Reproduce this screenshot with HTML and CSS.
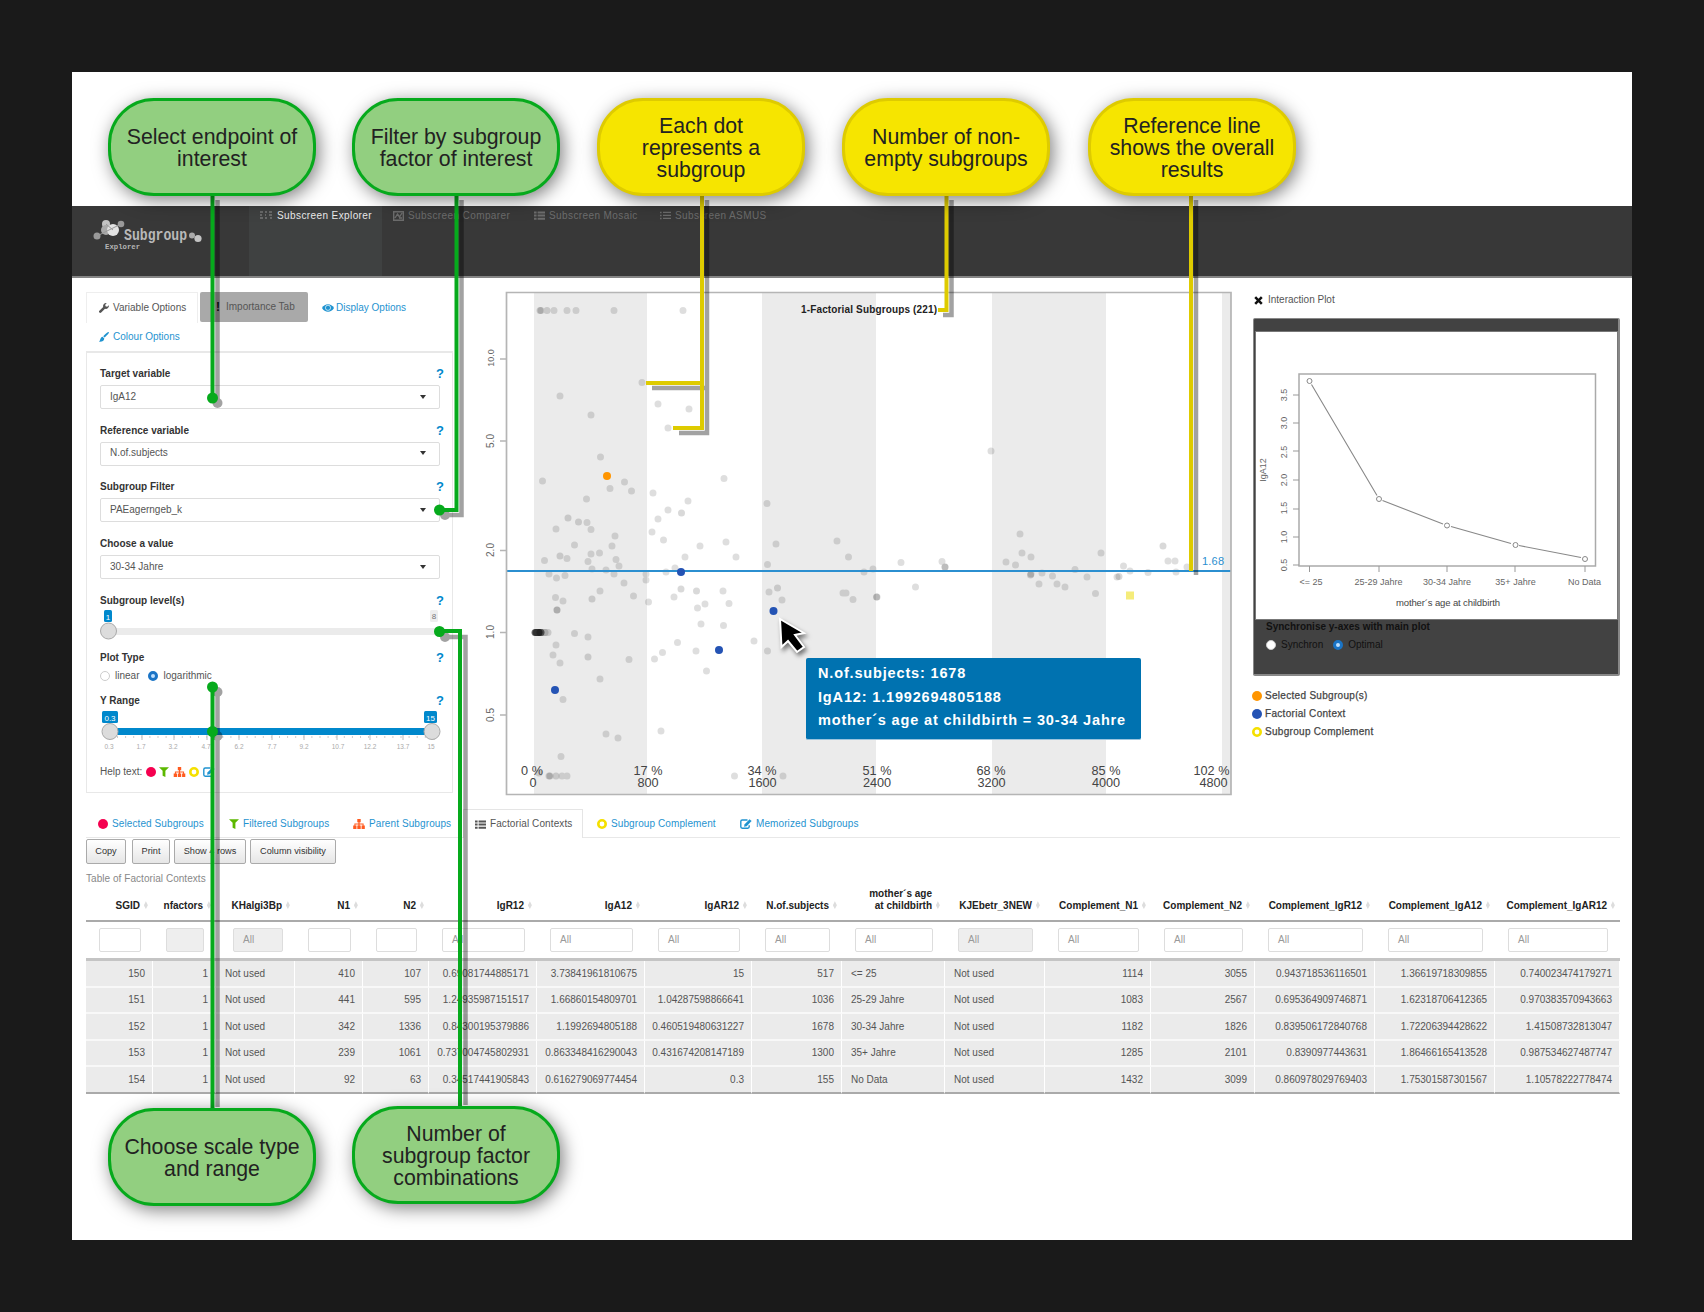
FILE: index.html
```html
<!DOCTYPE html>
<html lang="en">
<head>
<meta charset="utf-8">
<title>Subscreen Explorer</title>
<link rel="stylesheet" href="styles.css">
</head>
<body>
<svg class="defs" width="0" height="0" aria-hidden="true">
  <symbol id="i-dot" viewBox="0 0 10 10"><circle cx="5" cy="5" r="5" fill="currentColor"/></symbol>
  <symbol id="i-ring" viewBox="0 0 10 10"><circle cx="5" cy="5" r="3.7" fill="none" stroke="currentColor" stroke-width="2.6"/></symbol>
  <symbol id="i-filter" viewBox="0 0 10 10"><path d="M0 .2h10L6.400 3.800V10L3.600 8.800v-5z" fill="currentColor"/></symbol>
  <symbol id="i-tree" viewBox="0 0 12 10"><path d="M4.3 0h3.4v3.2H6.6v1.3h4v2h1.2V10H8.6V6.5h1V5.500H6.600v1h1.100V10H4.300V6.500h1.100v-1h-3v1h1.100V10H.2V6.500h1.200v-2h4V3.200H4.300z" fill="currentColor"/></symbol>
  <symbol id="i-edit" viewBox="0 0 12 10"><path d="M7.500 1H2.200A1.400 1.400 0 0 0 .8 2.400v5.400a1.400 1.400 0 0 0 1.400 1.400h5.600a1.400 1.400 0 0 0 1.400-1.400V6.300" fill="none" stroke="currentColor" stroke-width="1.400"/><path d="M9.600.2l2 1.900-5 5.100-2.600.6.600-2.500z" fill="currentColor"/></symbol>
  <symbol id="i-list" viewBox="0 0 11 9"><path d="M0 .5h2.600v2H0zm3.600 0H11v2H3.600zM0 3.600h2.600v2H0zm3.600 0H11v2H3.600zM0 6.700h2.600v2H0zm3.600 0H11v2H3.600z" fill="currentColor"/></symbol>
  <symbol id="i-lines" viewBox="0 0 11 9"><path d="M0 .8h1.600v1.400H0zm3 0h8v1.300H3zM0 3.800h1.600v1.400H0zm3 0h8v1.300H3zM0 6.800h1.600v1.400H0zm3 0h8v1.300H3z" fill="currentColor"/></symbol>
  <symbol id="i-wrench" viewBox="0 0 10 10"><path d="M9.800 2.200L8.200 3.700 6.500 3.300 6.200 1.700 7.700.2A3 3 0 0 0 4.200 4L.4 7.700a1.200 1.200 0 0 0 1.800 1.800L6 5.800a3 3 0 0 0 3.800-3.600z" fill="currentColor"/></symbol>
  <symbol id="i-eye" viewBox="0 0 12 8"><path d="M0 4C1.500 1.400 3.600.2 6 .2S10.500 1.400 12 4c-1.500 2.600-3.600 3.800-6 3.800S1.500 6.600 0 4z" fill="currentColor"/><circle cx="6" cy="3.800" r="2.600" fill="none" stroke="#fff" stroke-width=".7"/></symbol>
  <symbol id="i-brush" viewBox="0 0 10 10"><path d="M9.800.2c.5.600-.2 1.700-4.200 5.400L4.200 4.200C7.800.6 9.200-.3 9.800.2zM3.600 4.700l1.700 1.700C5 8.700 3.200 10 0 9.700c1.500-1 .8-4.300 3.600-5z" fill="currentColor"/></symbol>
</svg>

<div class="page">
  <header class="topbar">
    <div class="logo">
      <svg width="108" height="36" viewBox="0 0 108 36">
        <g fill="#c4c4c4"><circle cx="4" cy="18" r="3.500" fill="#999"/><circle cx="13" cy="6" r="4"/><circle cx="28" cy="6" r="3.300" fill="#999"/><circle cx="13" cy="12" r="5" fill="#aaa"/><circle cx="20" cy="12" r="6" fill="#e2e2e2"/><circle cx="99" cy="17.500" r="3" fill="#aaa"/><circle cx="105" cy="20.500" r="3.600"/></g>
        <path d="M4 18L28 6M13 6l7 6" stroke="#999" stroke-width="1"/>
        <text x="31" y="22" class="logo-main" textLength="63" lengthAdjust="spacingAndGlyphs">Subgroup</text>
        <text x="12" y="31" class="logo-sub" textLength="35" lengthAdjust="spacingAndGlyphs">Explorer</text>
      </svg>
    </div>
    <nav class="topnav">
      <a class="on"><svg width="13" height="9" viewBox="0 0 13 9"><path d="M0 1h3M5 1h2M9 1h3M0 4h2M5 4h1M9 4h3M0 7h3M5 7h2M10 7h2" stroke="#777" stroke-width="1.500"/></svg>Subscreen Explorer</a>
      <a><svg width="11" height="10" viewBox="0 0 11 10"><path d="M.7.700h9.600v8.600H.7zM2 7l2.500-4 2 3L9 2M6 7h3" fill="none" stroke="currentColor" stroke-width="1.400"/></svg>Subscreen Comparer</a>
      <a><svg width="11" height="9"><use href="#i-list"/></svg>Subscreen Mosaic</a>
      <a><svg width="11" height="9"><use href="#i-lines"/></svg>Subscreen ASMUS</a>
    </nav>
  </header>

  <main class="work">
    <section class="options">
      <div class="tabs">
        <a class="tab open"><svg width="10" height="10"><use href="#i-wrench"/></svg>Variable Options</a>
        <a class="tab grey"><b>!</b>Importance Tab</a>
        <a class="tab eye"><svg width="12" height="8"><use href="#i-eye"/></svg>Display Options</a>
        <a class="tab second"><svg width="10" height="10"><use href="#i-brush"/></svg>Colour Options</a>
      </div>
      <div class="panel">
        <div class="field"><div class="lab">Target variable<i>?</i></div><div class="select">IgA12</div></div>
        <div class="field"><div class="lab">Reference variable<i>?</i></div><div class="select">N.of.subjects</div></div>
        <div class="field"><div class="lab">Subgroup Filter<i>?</i></div><div class="select">PAEagerngeb_k</div></div>
        <div class="field"><div class="lab">Choose a value</div><div class="select">30-34 Jahre</div></div>
        <div class="field level"><div class="lab">Subgroup level(s)<i>?</i></div>
          <svg class="slider" width="344" height="32" viewBox="0 0 344 32">
            <rect x="6" y="18" width="332" height="7" rx="3" fill="#ebebeb"/>
            <rect x="4" y="0" width="8" height="12" rx="1.500" fill="#0088cc"/><text x="8" y="9.500" fill="#fff" text-anchor="middle">1</text>
            <rect x="330" y="0" width="8" height="12" rx="1.500" fill="#eee"/><text x="334" y="9" fill="#777" text-anchor="middle">8</text>
            <circle cx="8.500" cy="21" r="8" fill="#dcdcdc" stroke="#aaa"/>
          </svg>
        </div>
        <div class="field type"><div class="lab">Plot Type<i>?</i></div>
          <div class="radios"><span class="radio"></span>linear<span class="radio sel"></span>logarithmic</div>
        </div>
        <div class="field range"><div class="lab">Y Range<i>?</i></div>
          <svg class="slider" width="344" height="44" viewBox="0 0 344 44">
            <path d="M9.500 23v6M42 23v6M74 23v6M107 23v6M139 23v6M172 23v6M204 23v6M237 23v6M270 23v6M303 23v6M334 23v6" stroke="#bbb"/>
            <path d="M17 26h316" stroke="#ccc" stroke-width="2" stroke-dasharray="1 7.100"/>
            <rect x="8" y="17" width="326" height="7" fill="#0088cc"/>
            <rect x="2" y="0" width="16" height="12" rx="1.500" fill="#0088cc"/><text x="10" y="9.500" fill="#fff" text-anchor="middle">0.3</text>
            <rect x="324" y="0" width="13" height="12" rx="1.500" fill="#0088cc"/><text x="330.500" y="9.500" fill="#fff" text-anchor="middle">15</text>
            <circle cx="10" cy="20.500" r="8" fill="#dcdcdc" stroke="#aaa"/><circle cx="332" cy="20.500" r="8" fill="#dcdcdc" stroke="#aaa"/>
            <g class="ticks"><text x="9">0.3</text><text x="41">1.7</text><text x="73">3.2</text><text x="106">4.7</text><text x="139">6.2</text><text x="172">7.7</text><text x="204">9.2</text><text x="238">10.7</text><text x="270">12.2</text><text x="303">13.7</text><text x="331">15</text></g>
          </svg>
        </div>
        <div class="help">Help text:
          <svg class="red" width="10" height="10"><use href="#i-dot"/></svg><svg class="green" width="10" height="10"><use href="#i-filter"/></svg><svg class="orange" width="13" height="10"><use href="#i-tree"/></svg><svg class="yellow" width="10" height="10"><use href="#i-ring"/></svg><svg class="blue" width="12" height="10"><use href="#i-edit"/></svg>
        </div>
      </div>
    </section>

    <section class="chart">
      <svg width="760" height="510" viewBox="480 288 760 510">
        <path d="M534 293h113v501H534zM762 293h114v501H762zM992 293h114v501H992zM1222 293h9v501h-9z" fill="#ebebeb"/>
        <g class="dots">
          <path class="d1" d="M554 310.500h0M567 310.500h0M576 310.500h0M614 310.500h0M683 310.500h0M642 382.500h0M560 396h0M591 415h0M658 404h0M689 409h0M668 428h0M600.500 457h0M542.500 481h0M610 488.500h0M624.500 482h0M631.500 491h0M586.500 499h0M724 478.500h0M653 493h0M688 501h0M668 510h0M658 519h0M652 532h0M663.500 540h0M700 546h0M726 542h0M767 503.500h0M776 544h0M837 541h0M587 522.500h0M556 529h0M591 529.500h0M615 536h0M612 546h0M574.500 545h0M544.500 560.500h0M567 558.500h0M591 554h0M599.500 553h0M588 561.500h0M616 559.500h0M619 566h0M592 569h0M606 570h0M614 574h0M549 574h0M556.500 578h0M565 575.500h0M624 583h0M646 574h0M646 580h0M600 591h0M633.500 596h0M648.500 602h0M555.500 597.500h0M563 601h0M557 610h0M666 572h0M675 568h0M685 557h0M736 557h0M767.500 564.500h0M848.500 557h0M864 572h0M873 569h0M723 591h0M674 597h0M705 604h0M729 603.500h0M697.500 608h0M701 624h0M723.500 625.500h0M769 592h0M782 600h0M846 593h0M853 599.500h0M843 593h0M574.500 633.500h0M588 637h0M556 645h0M553 655h0M560 663h0M629 659.500h0M654.500 659h0M662.500 652.500h0M677.500 642.500h0M696 651h0M754 641h0M767.500 651h0M600 679h0M706.500 671h0M563 699.500h0M661 731h0M606 734h0M618 738h0M561 756.500h0M734.500 776h0M783 776h0M562 776h0M567 776h0M991 451h0M1020 534h0M1022 553h0M901 562.500h0M942 561.500h0M945 567h0M915.500 587h0M1006 562h0M1015.500 565h0M1031 557h0M1101 553h0M1075 569.500h0M1042 573h0M1052.500 576h0M1087 577h0M1039 584h0M1057 584h0M1065 587h0M1095.500 593.500h0M1123.500 566h0M1130 571h0M1117 577h0M1148 572.500h0M1175 561h0M1176 572h0M1168 561h0M1187 567h0"/>
          <path class="d2" d="M541 310.500h0M547 310.500h0M568 518h0M578.500 522h0M560 556h0M681.500 513h0M777.500 588h0M557 610h0M592 599h0M588 657h0M681 589h0M696.500 591h0M876.500 597h0M1030.500 575h0M549 776h0M556 776h0M539 773h0M1163 546h0M945 567h0M1119 576.500h0"/>
          <path class="d2" d="M540 310.500h0M1031 574h0M877 597h0M550 776h0"/>
          <path class="d3" d="M536 632.500h3"/><path class="d3" d="M535 632.500h6"/><path class="d2" d="M540 632.500h8"/><path class="d2" d="M540 632.500h5"/>
        </g>
        <path d="M506 571h725" stroke="#2b8fd0" stroke-width="2"/>
        <g stroke="none"><circle cx="607" cy="476" r="4" fill="#ff9500"/><g fill="#2453b4"><circle cx="681" cy="572" r="4"/><circle cx="773.500" cy="611" r="4"/><circle cx="719" cy="650" r="4"/><circle cx="555" cy="690" r="4"/></g><rect x="1126" y="591.500" width="8" height="8" fill="#f5ec7a"/></g>
        <path d="M506.500 292.500H1231V794.500H506.500zM500 359h6M500 441h6M500 550.500h6M500 632.500h6M500 715h6" fill="none" stroke="#b5b5b5" stroke-width="1.700"/>
        <g class="ylab" text-anchor="middle"><text class="small" transform="translate(494 358) rotate(-90)">10.0</text><text transform="translate(494 441) rotate(-90)">5.0</text><text transform="translate(494 550) rotate(-90)">2.0</text><text transform="translate(494 632) rotate(-90)">1.0</text><text transform="translate(494 715) rotate(-90)">0.5</text></g>
        <text class="title" x="801" y="313" textLength="136">1-Factorial Subgroups (221)</text>
        <text class="ref" x="1202" y="565" textLength="22">1.68</text>
        <g class="xlab"><text x="532" y="774.500">0 %</text><text x="533" y="786.500">0</text><text x="648" y="774.500">17 %</text><text x="648" y="786.500">800</text><text x="762" y="774.500">34 %</text><text x="762.500" y="786.500">1600</text><text x="877" y="774.500">51 %</text><text x="877" y="786.500">2400</text><text x="991" y="774.500">68 %</text><text x="991.500" y="786.500">3200</text><text x="1106" y="774.500">85 %</text><text x="1106" y="786.500">4000</text><text x="1211.500" y="774.500">102 %</text><text x="1213.500" y="786.500">4800</text></g>
      </svg>
    </section>

    <aside class="side">
      <div class="side-title"><svg width="9" height="9" viewBox="0 0 9 9"><path d="M1.200 1.200l6.600 6.600M7.800 1.200L1.200 7.800" stroke="#111" stroke-width="2.500"/></svg>Interaction Plot</div>
      <div class="card">
        <svg class="iplot" width="361" height="287" viewBox="1256 332 361 287">
          <path fill="#fff" d="M1256 332h361v287h-361z"/>
          <path d="M1299 374H1595.500V566H1299z" fill="none" stroke="#aaa" stroke-width="1.500"/>
          <path d="M1293 395h6M1293 423h6M1293 451h6M1293 480h6M1293 509h6M1293 537h6M1293 565h6M1309.500 566v6M1379 566v6M1447 566v6M1515 566v6M1585 566v6" stroke="#999"/>
          <path d="M1311.500 384.500L1377 495.500M1382.500 500.500L1443 524M1451 526.500L1511 543.500M1519 545.500L1581 557.500" stroke="#888" stroke-width="1.100"/>
          <g fill="#fff" stroke="#888"><circle cx="1309.500" cy="381" r="2.500"/><circle cx="1379" cy="499" r="2.500"/><circle cx="1447" cy="525.500" r="2.500"/><circle cx="1515.500" cy="545" r="2.500"/><circle cx="1585" cy="559" r="2.500"/></g>
          <g class="pl"><text transform="translate(1286.500 395) rotate(-90)">3.5</text><text transform="translate(1286.500 423) rotate(-90)">3.0</text><text transform="translate(1286.500 452) rotate(-90)">2.5</text><text transform="translate(1286.500 480) rotate(-90)">2.0</text><text transform="translate(1286.500 508) rotate(-90)">1.5</text><text transform="translate(1286.500 537) rotate(-90)">1.0</text><text transform="translate(1286.500 565) rotate(-90)">0.5</text><text transform="translate(1266 470) rotate(-90)">IgA12</text>
          <text x="1311" y="585">&lt;= 25</text><text x="1378.500" y="585">25-29 Jahre</text><text x="1447" y="585">30-34 Jahre</text><text x="1515.500" y="585">35+ Jahre</text><text x="1584.500" y="585">No Data</text><text class="xl" x="1448" y="606" textLength="104">mother´s age at childbirth</text></g>
        </svg>
        <div class="sync"><b>Synchronise y-axes with main plot</b><div class="radios"><span class="radio"></span>Synchron<span class="radio sel"></span>Optimal</div></div>
      </div>
      <ul class="legend">
        <li><svg class="l-sel" width="10" height="10"><use href="#i-dot"/></svg>Selected Subgroup(s)</li>
        <li><svg class="l-ctx" width="10" height="10"><use href="#i-dot"/></svg>Factorial Context</li>
        <li><svg class="yellow" width="10" height="10"><use href="#i-ring"/></svg>Subgroup Complement</li>
      </ul>
    </aside>
  </main>

  <section class="results">
    <nav class="rtabs">
      <a class="w1"><svg class="red" width="10" height="10"><use href="#i-dot"/></svg>Selected Subgroups</a>
      <a class="w2"><svg class="green" width="10" height="10"><use href="#i-filter"/></svg>Filtered Subgroups</a>
      <a class="w3"><svg class="orange" width="12" height="10"><use href="#i-tree"/></svg>Parent Subgroups</a>
      <a class="open w4"><svg width="11" height="9"><use href="#i-list"/></svg>Factorial Contexts</a>
      <a class="w5"><svg class="yellow" width="10" height="10"><use href="#i-ring"/></svg>Subgroup Complement</a>
      <a class="w6"><svg class="blue" width="12" height="10"><use href="#i-edit"/></svg>Memorized Subgroups</a>
    </nav>
    <div class="buttons"><span class="b1">Copy</span><span class="b2">Print</span><span class="b3">Show 4 rows</span><span class="b4">Column visibility</span></div>
    <div class="caption">Table of Factorial Contexts</div>
    <table>
      <colgroup><col style="width:67px"><col style="width:63px"><col style="width:79px"><col style="width:68px"><col style="width:66px"><col style="width:108px"><col style="width:108px"><col style="width:107px"><col style="width:90px"><col style="width:103px"><col style="width:100px"><col style="width:106px"><col style="width:104px"><col style="width:120px"><col style="width:120px"><col style="width:125px"></colgroup>
      <thead>
        <tr class="names"><th>SGID</th><th>nfactors</th><th>KHalgi3Bp</th><th>N1</th><th>N2</th><th>IgR12</th><th>IgA12</th><th>IgAR12</th><th>N.of.subjects</th><th>mother´s age<br>at childbirth</th><th>KJEbetr_3NEW</th><th>Complement_N1</th><th>Complement_N2</th><th>Complement_IgR12</th><th>Complement_IgA12</th><th>Complement_IgAR12</th></tr>
        <tr class="filters"><td><i></i></td><td><i class="off"></i></td><td><i class="off">All</i></td><td><i></i></td><td><i></i></td><td><i>All</i></td><td><i>All</i></td><td><i>All</i></td><td><i>All</i></td><td><i>All</i></td><td><i class="off">All</i></td><td><i>All</i></td><td><i>All</i></td><td><i>All</i></td><td><i>All</i></td><td><i>All</i></td></tr>
      </thead>
      <tbody>
        <tr><td>150</td><td>1</td><td>Not used</td><td>410</td><td>107</td><td>0.69081744885171</td><td>3.73841961810675</td><td>15</td><td>517</td><td>&lt;= 25</td><td>Not used</td><td>1114</td><td>3055</td><td>0.943718536116501</td><td>1.36619718309855</td><td>0.740023474179271</td></tr>
        <tr><td>151</td><td>1</td><td>Not used</td><td>441</td><td>595</td><td>1.24935987151517</td><td>1.66860154809701</td><td>1.04287598866641</td><td>1036</td><td>25-29 Jahre</td><td>Not used</td><td>1083</td><td>2567</td><td>0.695364909746871</td><td>1.62318706412365</td><td>0.970383570943663</td></tr>
        <tr><td>152</td><td>1</td><td>Not used</td><td>342</td><td>1336</td><td>0.84300195379886</td><td>1.1992694805188</td><td>0.460519480631227</td><td>1678</td><td>30-34 Jahre</td><td>Not used</td><td>1182</td><td>1826</td><td>0.839506172840768</td><td>1.72206394428622</td><td>1.41508732813047</td></tr>
        <tr><td>153</td><td>1</td><td>Not used</td><td>239</td><td>1061</td><td>0.737004745802931</td><td>0.863348416290043</td><td>0.431674208147189</td><td>1300</td><td>35+ Jahre</td><td>Not used</td><td>1285</td><td>2101</td><td>0.8390977443631</td><td>1.86466165413528</td><td>0.987534627487747</td></tr>
        <tr><td>154</td><td>1</td><td>Not used</td><td>92</td><td>63</td><td>0.34517441905843</td><td>0.616279069774454</td><td>0.3</td><td>155</td><td>No Data</td><td>Not used</td><td>1432</td><td>3099</td><td>0.860978029769403</td><td>1.75301587301567</td><td>1.10578222778474</td></tr>
      </tbody>
    </table>
  </section>
</div>

<div class="tip">N.of.subjects: 1678<br>IgA12: 1.1992694805188<br>mother´s age at childbirth = 30-34 Jahre</div>
<svg class="leaders" width="1704" height="1312" viewBox="0 0 1704 1312">
  <g class="shade"><path d="M217.500 200V403M461.500 200V515H446M217.500 692V1107M446 637H465.500V1105M707 200V433H679M705 388H652M951.500 200V315H943M1196 200V575"/><g stroke="none"><circle cx="217.500" cy="403" r="5"/><circle cx="445" cy="515" r="5"/><circle cx="445" cy="637" r="5"/><circle cx="217.500" cy="692" r="5"/><circle cx="217.500" cy="736" r="5"/></g></g>
  <g fill="none" stroke-width="4"><path stroke="#06aa1c" d="M212.500 195V398M456.500 195V510H440M440 631H460V1106M212.500 687V1109"/><path stroke="#decb00" d="M702 195V428H673M702 383H646M946.500 195V310H938M1191 195V571"/></g>
  <g fill="#06aa1c"><circle cx="212.500" cy="398" r="5.500"/><circle cx="439.500" cy="510" r="5.500"/><circle cx="439.500" cy="631.500" r="5.500"/><circle cx="212.500" cy="687" r="5.500"/><circle cx="212.500" cy="731.500" r="5.500"/></g>
  <path class="cursor" d="M780 619l1.500 28 6.500-6 9 11 7-5-9-12 9-2z" fill="#000" stroke="#fff" stroke-width="2"/>
</svg>
<div class="callout green-c c1">Select endpoint of<br>interest</div>
<div class="callout green-c c2">Filter by subgroup<br>factor of interest</div>
<div class="callout yellow-c c3">Each dot<br>represents a<br>subgroup</div>
<div class="callout yellow-c c4">Number of non-<br>empty subgroups</div>
<div class="callout yellow-c c5">Reference line<br>shows the overall<br>results</div>
<div class="callout green-c c6">Choose scale type<br>and range</div>
<div class="callout green-c c7">Number of<br>subgroup factor<br>combinations</div>
</body>
</html>
```
FILE: styles.css
```css
* { box-sizing: border-box; }
body { margin: 0; width: 1704px; height: 1312px; padding: 72px; background: #1a1a1a; position: relative; overflow: hidden; font: 10px/12px "Liberation Sans", Arial, sans-serif; color: #555; }
.defs { position: absolute; }
svg { display: block; flex: none; }
.page { width: 1560px; height: 1168px; background: #fff; padding-top: 134px; }
.red { color: #f5004f; } .green { color: #5cb800; } .orange { color: #ff5a1f; } .yellow { color: #f5e000; } .blue { color: #1f93d0; }

.topbar { height: 72px; background: #383838; border-bottom: 2px solid #858585; display: flex; }
.logo { width: 177px; padding: 12px 0 0 21px; }
.logo svg { overflow: visible; }
.logo-main { font: bold 16px "Liberation Mono", monospace; fill: #b9b9b9; }
.logo-sub { font: bold 8px "Liberation Mono", monospace; fill: #b5b5b5; }
.topnav { display: flex; }
.topnav a { display: flex; gap: 4px; height: 70px; padding: 4px 10px 0 11px; color: #6c6c6c; width: 141px; white-space: nowrap; letter-spacing: .4px; }
.topnav a svg { margin-top: 1px; }
.topnav a:nth-child(3) { width: 126px; }
.topnav a.on { background: #3f4141; color: #e8e8e8; width: 133px; gap: 4px; }

.work { display: flex; height: 520px; padding: 10px 0 0 14px; }
.options { width: 367px; padding-top: 4px; margin-right: 27px; }
.tabs { display: flex; flex-wrap: wrap; gap: 0 2px; height: 59px; }
.tab { height: 31px; padding: 0 12px; display: flex; align-items: center; gap: 4px; color: #1f93d0; white-space: nowrap; }
.tab.open { color: #555; border: 1px solid #eee; border-bottom: 0; width: 112px; padding-right: 0; }
.tab.grey { background: #a9a9a9; color: #555; height: 30px; width: 108px; border-radius: 2px; padding-left: 16px; gap: 6px; }
.tab.grey b { color: #111; font-size: 12px; }
.tab.eye { gap: 2px; }
.tab.second { height: 28px; padding-left: 13px; }
.panel { height: 442px; border: 1px solid #e8e8e8; border-top-width: 2px; padding: 13px 13px 0; }
.field { height: 56.700px; }
.lab { height: 19px; padding-top: 2px; font-weight: bold; color: #333; display: flex; justify-content: space-between; width: 344px; }
.lab i { font: bold 13px/12px "Liberation Sans", Arial, sans-serif; color: #0088cc; }
.select { width: 340px; height: 24px; border: 1px solid #ddd; border-radius: 2px; padding: 4px 9px 5px; display: flex; justify-content: space-between; align-items: center; }
.select::after { content: ""; border: 3px solid transparent; border-top: 4px solid #333; border-bottom: 0; margin-right: 4px; }
.field.level { height: 57px; }
.slider { overflow: visible; margin-top: -2px; }
.slider text { font-size: 8px; }
.type { height: 43px; }
.type .lab { height: 20px; }
.radios { display: flex; align-items: center; }
.radio { width: 10px; height: 10px; border: 1px solid #ccc; border-radius: 50%; background: #fff; margin-right: 5px; }
.radio.sel { border: 3px solid #1a74c6; background: #bfe0ff; margin-left: 9px; }
.slider .ticks text { font-size: 6.500px; fill: #aaa; text-anchor: middle; transform: translateY(38px); }
.range { height: 73px; }
.range .lab { height: 20px; }
.help { display: flex; gap: 3.500px; align-items: center; }

.chart { width: 760px; }
.dots path { fill: none; stroke-width: 7px; stroke-linecap: round; stroke: #000; }
.dots .d1 { stroke-opacity: .13; }
.dots .d2 { stroke-opacity: .15; }
.dots .d3 { stroke-opacity: .55; }
.ylab text, .pl text { font-size: 10px; fill: #666; }
.ylab .small { font-size: 9px; }
.title { font-weight: bold; font-size: 10px; fill: #222; }
.ref { font-size: 11px; fill: #2b8fd0; }
.xlab text { font-size: 12.700px; fill: #444; text-anchor: middle; }

.side { width: 367px; margin-left: 13px; padding-top: 6px; }
.side-title { display: flex; gap: 5px; align-items: center; margin: 0 0 12px 1px; }
.card { height: 358px; background: #424242; border: 1px solid #888; border-width: 1px 2px 2px 1px; padding: 13px 1px 0 2px; border-radius: 2px; color: #111; }
.iplot { outline: 1px solid #777; }
.pl text { font-size: 9px; text-anchor: middle; }
.pl .xl { font-size: 9.500px; fill: #444; }
.sync { padding: 2px 10px; }
.sync .radios { margin-top: 6px; }
.sync .radio.sel { margin-left: 10px; }
.legend { margin: 11px 0 0 -1px; padding: 0; list-style: none; -webkit-text-stroke: .25px #444; letter-spacing: .3px; }
.legend li { height: 18px; display: flex; gap: 3px; align-items: center; color: #444; }
.l-sel { color: #ff9500; } .l-ctx { color: #2453b4; }

.results { margin: 0 12px 0 14px; }
.rtabs { height: 29px; margin-top: 11px; border-bottom: 1px solid #e8e8e8; display: flex; letter-spacing: .1px; }
.rtabs a { height: 29px; display: flex; align-items: center; gap: 4px; padding-left: 12px; color: #1f93d0; }
.w1 { width: 131px; } .w2 { width: 124px; } .w3 { width: 122px; } .w4 { width: 120px; } .w5 { width: 144px; }
.rtabs .w5 { padding-left: 14px; } .rtabs .w6 { padding-left: 13px; }
.rtabs .open { color: #555; background: #fff; border: 1px solid #e5e5e5; border-bottom: 0; padding-left: 11px; }
.buttons { display: flex; margin-top: 1px; }
.buttons span { height: 25px; border: 1px solid #aaa; border-radius: 2px; background: linear-gradient(#fff, #e6e6e6); text-align: center; font-size: 9.200px; line-height: 23px; color: #333; }
.b1 { width: 40px; margin-right: 6px; } .b2 { width: 38px; margin-right: 4px; } .b3 { width: 72px; margin-right: 4px; } .b4 { width: 86px; }
.caption { margin-top: 9px; height: 15px; color: #888; letter-spacing: .05px; }
table { width: 1534px; table-layout: fixed; border-collapse: separate; border-spacing: 0; }
th { text-align: right; padding: 0 13px 8px 0; vertical-align: bottom; color: #222; white-space: nowrap; position: relative; border-bottom: 2px solid #aaa; }
.names th { height: 33px; }
th::after { content: "♦"; color: #ddd; font: 7px/12px "DejaVu Sans", sans-serif; position: absolute; right: 4px; bottom: 8px; transform: scaleY(1.500); }
.filters td { height: 39px; padding: 0 12px 0 13px; border-bottom: 3px solid #c4c4c4; }
.filters td:nth-child(3) { padding-left: 17px; }
.filters i { display: block; height: 24px; border: 1px solid #ddd; border-radius: 2px; font-style: normal; line-height: 22px; padding-left: 9px; color: #999; text-align: left; }
.filters i.off { background: #eee; }
tbody td { height: 26.500px; padding: 1px 7px 0 0; text-align: right; background: #ebebeb; border-right: 1px solid #fff; border-bottom: 2px solid #f8f8f8; white-space: nowrap; }
tbody td:nth-child(3), tbody td:nth-child(10), tbody td:nth-child(11) { text-align: left; padding-left: 9px; }
tbody tr:last-child td { border-bottom: 2px solid #aaa; }

.tip { position: absolute; left: 806px; top: 658px; width: 335px; height: 82px; background: #0072b0; color: #fff; font-weight: bold; font-size: 14.500px; line-height: 23.500px; letter-spacing: .840px; padding: 4px 12px; border-radius: 2px; border-bottom: 1px solid #9bc4dd; white-space: nowrap; }
.leaders { position: absolute; left: 0; top: 0; }
.shade { fill: #000; opacity: .36; filter: blur(.6px); }
.shade path { fill: none; stroke: #000; stroke-width: 4.500px; }
.cursor { filter: drop-shadow(2px 3px 2px rgba(0,0,0,.5)); }
.callout { position: absolute; width: 208px; height: 98px; border-radius: 46px; border: 3px solid; display: flex; align-items: center; justify-content: center; text-align: center; font-size: 21.300px; line-height: 22px; color: #222; white-space: nowrap; box-shadow: 3px 4px 18px rgba(0,0,0,.5); top: 98px; padding-top: 2px; }
.green-c { background: #92cf80; border-color: #06aa1c; }
.yellow-c { background: #f6e500; border-color: #decb00; }
.c1 { left: 108px; } .c2 { left: 352px; } .c3 { left: 597px; } .c4 { left: 842px; } .c5 { left: 1088px; }
.c6 { left: 108px; top: 1108px; } .c7 { left: 352px; top: 1105.500px; }
```
